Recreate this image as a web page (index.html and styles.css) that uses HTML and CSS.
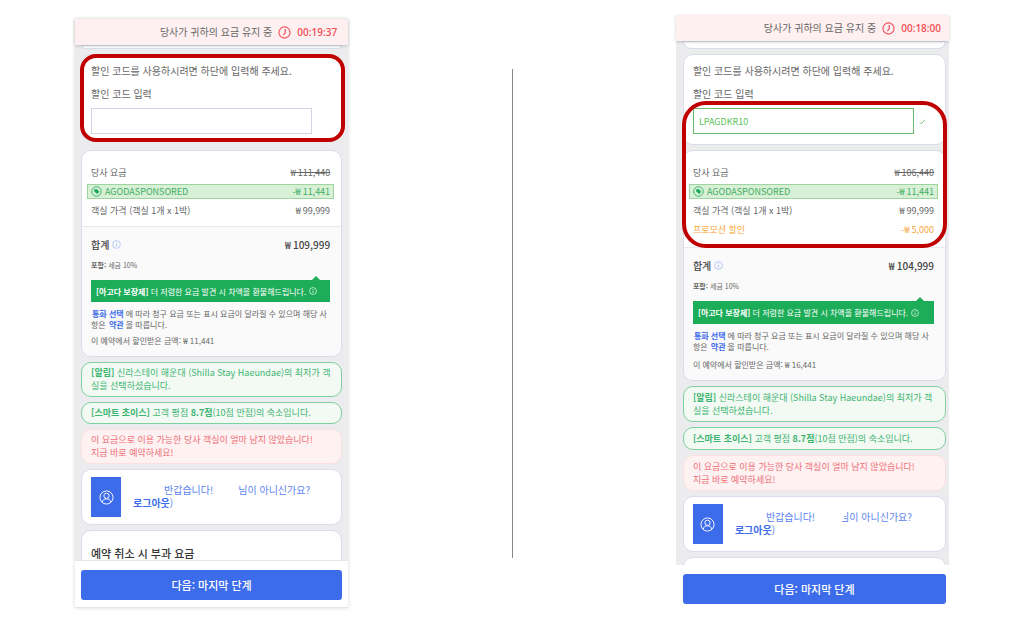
FILE: index.html
```html
<!DOCTYPE html>
<html lang="ko">

<head>
    <meta charset="UTF-8">
    <meta name="viewport" content="width=device-width, initial-scale=1.0">
    <title>할인 코드 입력</title>
    <link rel="stylesheet" href="styles.css">
</head>

<body>
    <svg width="0" height="0" class="sprite" aria-hidden="true">
        <symbol id="clock" viewBox="0 0 14 14">
            <circle cx="7" cy="7" r="6" fill="none" stroke="currentColor" stroke-width="1.2" />
            <path d="M7.8 3.2v4.2L5.6 9.8" fill="none" stroke="currentColor" stroke-width="1.3" />
        </symbol>
        <symbol id="info" viewBox="0 0 10 10">
            <circle cx="5" cy="5" r="4.3" fill="none" stroke="currentColor" stroke-width="0.8" />
            <path d="M5 4.4v3M5 2.6v1" stroke="currentColor" stroke-width="0.9" />
        </symbol>
        <symbol id="tag" viewBox="0 0 12 12">
            <circle cx="6" cy="6" r="5.2" fill="none" stroke="currentColor" stroke-width="0.9" />
            <path d="M3.2 3.8l3-.6 2.9 3.1-2.4 2.5-3.1-2.9z" fill="currentColor" />
        </symbol>
        <symbol id="user" viewBox="0 0 16 16">
            <g fill="none" stroke="currentColor" stroke-width="1">
                <circle cx="8" cy="8" r="7" />
                <circle cx="8" cy="6.2" r="2.8" />
                <path d="M3.4 13c.4-2.3 2-3.6 4.6-3.6s4.2 1.3 4.6 3.6" />
            </g>
        </symbol>
    </svg>

    <main class="compare">
        <section class="phone">
            <header class="hold-bar">
                <span>당사가 귀하의 요금 유지 중</span>
                <svg class="clock"><use href="#clock" /></svg>
                <time>00:19:37</time>
            </header>
            <div class="content">
                <div class="card previous"></div>
                <form class="card coupon short">
                    <p>할인 코드를 사용하시려면 하단에 입력해 주세요.</p>
                    <label for="code1">할인 코드 입력</label>
                    <div class="field">
                        <input type="text" id="code1">
                    </div>
                    <div class="highlight whole"></div>
                </form>
                <div class="card price">
                    <dl class="charges">
                        <div><dt>당사 요금</dt><dd><s>₩ 111,440</s></dd></div>
                        <div class="sponsored"><dt><svg><use href="#tag" /></svg>AGODASPONSORED</dt><dd>-₩ 11,441</dd></div>
                        <div><dt>객실 가격 (객실 1개 x 1박)</dt><dd>₩ 99,999</dd></div>
                    </dl>
                    <div class="summary">
                        <div class="total"><span>합계 <svg><use href="#info" /></svg></span><span>₩ 109,999</span></div>
                        <p class="tax"><b>포함:</b> 세금 10%</p>
                        <p class="guarantee"><span><b>[아고다 보장제]</b> 더 저렴한 요금 발견 시 차액을 환불해드립니다.</span><svg><use href="#info" /></svg></p>
                        <p class="terms"><a href="#">통화 선택</a>에 따라 청구 요금 또는 표시 요금이 달라질 수 있으며 해당 사<br>항은 <a href="#">약관</a>을 따릅니다.</p>
                        <p class="saved">이 예약에서 할인받은 금액: ₩ 11,441</p>
                    </div>
                </div>
                <p class="alert green"><b>[알림]</b> 신라스테이 해운대 (Shilla Stay Haeundae)의 최저가 객<br>실을 선택하셨습니다.</p>
                <p class="alert green"><b>[스마트 초이스]</b> 고객 평점 <b>8.7점</b>(10점 만점)의 숙소입니다.</p>
                <p class="alert red">이 요금으로 이용 가능한 당사 객실이 얼마 남지 않았습니다!<br>지금 바로 예약하세요!</p>
                <div class="card welcome">
                    <div class="avatar"><svg><use href="#user" /></svg></div>
                    <p><span class="name"></span>반갑습니다!<span class="name"></span>님이 아니신가요?<br><a href="#">로그아웃</a>)</p>
                </div>
                <div class="card cancel">
                    <h2>예약 취소 시 부과 요금</h2>
                </div>
            </div>
            <footer class="action">
                <button type="button">다음: 마지막 단계</button>
            </footer>
        </section>

        <div class="divider"></div>

        <section class="phone after">
            <header class="hold-bar">
                <span>당사가 귀하의 요금 유지 중</span>
                <svg class="clock"><use href="#clock" /></svg>
                <time>00:18:00</time>
            </header>
            <div class="content">
                <div class="card previous"></div>
                <form class="card coupon">
                    <p>할인 코드를 사용하시려면 하단에 입력해 주세요.</p>
                    <label for="code2">할인 코드 입력</label>
                    <div class="field">
                        <input type="text" id="code2" class="valid" value="LPAGDKR10">
                        <svg viewBox="0 0 8 8"><path d="M1 5l1.5 1.5L7 2" fill="none" stroke="currentColor" /></svg>
                    </div>
                </form>
                <div class="card price">
                    <dl class="charges">
                        <div><dt>당사 요금</dt><dd><s>₩ 106,440</s></dd></div>
                        <div class="sponsored"><dt><svg><use href="#tag" /></svg>AGODASPONSORED</dt><dd>-₩ 11,441</dd></div>
                        <div><dt>객실 가격 (객실 1개 x 1박)</dt><dd>₩ 99,999</dd></div>
                        <div class="promo"><dt>프로모션 할인</dt><dd>-₩ 5,000</dd></div>
                    </dl>
                    <div class="summary">
                        <div class="total"><span>합계 <svg><use href="#info" /></svg></span><span>₩ 104,999</span></div>
                        <p class="tax"><b>포함:</b> 세금 10%</p>
                        <p class="guarantee"><span><b>[아고다 보장제]</b> 더 저렴한 요금 발견 시 차액을 환불해드립니다.</span><svg><use href="#info" /></svg></p>
                        <p class="terms"><a href="#">통화 선택</a>에 따라 청구 요금 또는 표시 요금이 달라질 수 있으며 해당 사<br>항은 <a href="#">약관</a>을 따릅니다.</p>
                        <p class="saved">이 예약에서 할인받은 금액: ₩ 16,441</p>
                    </div>
                    <div class="highlight discount"></div>
                </div>
                <p class="alert green"><b>[알림]</b> 신라스테이 해운대 (Shilla Stay Haeundae)의 최저가 객<br>실을 선택하셨습니다.</p>
                <p class="alert green"><b>[스마트 초이스]</b> 고객 평점 <b>8.7점</b>(10점 만점)의 숙소입니다.</p>
                <p class="alert red">이 요금으로 이용 가능한 당사 객실이 얼마 남지 않았습니다!<br>지금 바로 예약하세요!</p>
                <div class="card welcome">
                    <div class="avatar"><svg><use href="#user" /></svg></div>
                    <p><span class="name"></span>반갑습니다!<span class="name cover"></span>님이 아니신가요?<br><a href="#">로그아웃</a>)</p>
                </div>
                <div class="card cancel"></div>
            </div>
            <footer class="action">
                <button type="button">다음: 마지막 단계</button>
            </footer>
        </section>
    </main>
</body>

</html>
```

FILE: styles.css
```css
* {
    box-sizing: border-box;
}

body {
    margin: 0;
    background-color: white;
    color: #666;
    font-family: "Noto Sans CJK KR", "Noto Sans", sans-serif;
    font-size: 10px;
    line-height: 12px;
}

p, dl, dd, h2 {
    margin: 0;
}

a {
    color: #3d6ceb;
    font-weight: bold;
    text-decoration: none;
}

svg {
    flex-shrink: 0;
}

.sprite {
    position: absolute;
}

.compare {
    display: grid;
    grid-template-columns: 5fr 6fr 5fr;
    grid-template-rows: 100%;
    height: 100vh;
    min-height: 420px;
    padding: 0 75px;
}

.divider {
    justify-self: center;
    width: 1px;
    margin: 69px 0 70px;
    background-color: #888;
}

.phone {
    display: flex;
    flex-direction: column;
    min-width: 0;
    min-height: 0;
    margin: 19px 0 20px;
    background-color: #ececee;
    box-shadow: 0 0 4px rgba(0, 0, 0, 0.15);
    white-space: nowrap;
}

.phone.after {
    margin: 15px 0 17px;
    box-shadow: none;
}

/* rate countdown */
.hold-bar {
    position: relative;
    z-index: 1;
    display: flex;
    align-items: center;
    justify-content: flex-end;
    gap: 6px;
    height: 26px;
    padding: 0 11px;
    flex-shrink: 0;
    background-color: #fef0f0;
    box-shadow: 0 1px 3px rgba(0, 0, 0, 0.2);
}

.after .hold-bar {
    padding: 0 8px;
}

.hold-bar time {
    color: #f0505a;
    font-family: "Open Sans", "Noto Sans", sans-serif;
    font-weight: 600;
}

.clock {
    width: 13px;
    height: 13px;
    color: #f0505a;
}

.content {
    flex: 1;
    display: flex;
    flex-direction: column;
    gap: 5px;
    min-height: 0;
    padding: 0 6px;
    overflow: hidden;
}

.after .content {
    padding: 0 3px 0 7px;
}

.card {
    position: relative;
    flex-shrink: 0;
    background-color: white;
    border: 1px solid #d9deeb;
    border-radius: 10px;
}

.previous {
    height: 4px;
    border-radius: 0 0 10px 10px;
}

.after .previous {
    height: 8px;
}

/* coupon code */
.coupon {
    display: flex;
    flex-direction: column;
    padding: 10px 9px;
}

.coupon.short {
    margin-bottom: 4px;
    padding-bottom: 6px;
}

.coupon label {
    margin: 11px 0 8px;
}

.field {
    display: flex;
    align-items: center;
    gap: 5px;
}

.field input {
    width: 221px;
    height: 26px;
    padding: 0 5px;
    border: 1px solid #d3d6e2;
    background-color: white;
    font: inherit;
    font-size: 9px;
}

.field .valid {
    border-color: #6bb96b;
    color: #5bbf5b;
}

.field svg {
    width: 7px;
    height: 7px;
    color: #5bb55b;
}

.highlight {
    position: absolute;
    border: 4px solid #c00000;
    border-radius: 24px;
    pointer-events: none;
}

.highlight.whole {
    inset: -1px -4px -2px -2px;
    border-radius: 16px;
}

.highlight.discount {
    top: -50px;
    left: -2px;
    right: -2px;
    height: 147px;
}

/* price breakdown */
.charges {
    padding: 12px 11px 6px 9px;
    font-size: 9px;
}

.after .charges {
    padding-bottom: 8px;
}

.charges div {
    display: flex;
    align-items: center;
    justify-content: space-between;
    height: 19px;
}

.charges dt {
    display: flex;
    align-items: center;
    gap: 3px;
}

.charges .sponsored {
    height: 15px;
    margin: 2px -4px;
    padding: 0 3px;
    border: 1px solid #9fd3a0;
    background-color: #d8f0d6;
    color: #3fae62;
}

.sponsored svg {
    width: 11px;
    height: 11px;
    color: #1ba95b;
}

.charges .promo {
    color: #f9a63a;
}

.summary {
    padding: 10px 11px 10px 9px;
    border-top: 1px solid #e8e8ec;
    border-radius: 0 0 10px 10px;
    background-color: #fafafa;
    font-size: 8px;
    line-height: 11px;
}

.total {
    display: flex;
    justify-content: space-between;
    color: #444;
    font-size: 10px;
    line-height: 15px;
    font-weight: 500;
}

.total span {
    display: flex;
    align-items: center;
    gap: 3px;
}

.total svg {
    width: 9px;
    height: 9px;
    color: #9fb6f5;
}

.tax {
    margin: 8px 0 9px;
    font-size: 7px;
}

.guarantee {
    position: relative;
    display: flex;
    align-items: center;
    gap: 3px;
    height: 22px;
    padding: 0 5px;
    background-color: #1dad59;
    color: white;
}

.after .guarantee {
    height: 23px;
}

.guarantee::before {
    content: "";
    position: absolute;
    right: 10px;
    bottom: 100%;
    border: 4px solid transparent;
    border-top: 0;
    border-bottom-color: #1dad59;
}

.guarantee svg {
    width: 8px;
    height: 8px;
}

.terms {
    margin: 6px 0 5px;
}

.after .terms {
    margin-bottom: 7px;
}

.terms a {
    margin: 0 2px 0 1px;
}

/* messages */
.alert {
    flex-shrink: 0;
    padding: 3px 9px 4px;
    border: 1px solid;
    border-radius: 10px;
    font-size: 9px;
    line-height: 13px;
}

.after .alert {
    padding: 4px 9px;
}

.alert.green {
    border-color: #7dd0a0;
    background-color: #f3f9f3;
    color: #3db572;
}

.alert.red {
    border-color: #fbe0e0;
    background-color: #fef1f1;
    color: #ee7077;
}

.welcome {
    display: flex;
    gap: 12px;
    padding: 7px 9px;
    color: #5b84ee;
    line-height: 13px;
}

.welcome p {
    padding-top: 6px;
}

.avatar {
    display: flex;
    align-items: center;
    justify-content: center;
    width: 30px;
    height: 40px;
    background-color: #3d6ceb;
    color: white;
}

.avatar svg {
    width: 15px;
    height: 15px;
}

/* guest names are left blank */
.name {
    display: inline-block;
    width: 31px;
    height: 10px;
}

.welcome .name + .name {
    width: 25px;
}

.name.cover {
    position: relative;
    margin-right: -4px;
    background-color: white;
}

.welcome .name + .name.cover {
    width: 29px;
}

.cancel {
    height: 60px;
    padding: 15px 9px;
}

.cancel h2 {
    color: #333;
    font-size: 11px;
    line-height: 15px;
    font-weight: 500;
}

.action {
    flex-shrink: 0;
    padding: 9px 6px 7px;
    border: 1px solid #e6e6e6;
    border-width: 1px 0;
    background-color: white;
}

.after .action {
    padding: 9px 3px 7px 7px;
    border-width: 0;
}

.action button {
    display: block;
    width: 100%;
    height: 30px;
    border: none;
    border-radius: 3px;
    background-color: #3d6ceb;
    color: white;
    font: inherit;
    font-size: 11px;
    font-weight: 500;
    cursor: pointer;
}
```
